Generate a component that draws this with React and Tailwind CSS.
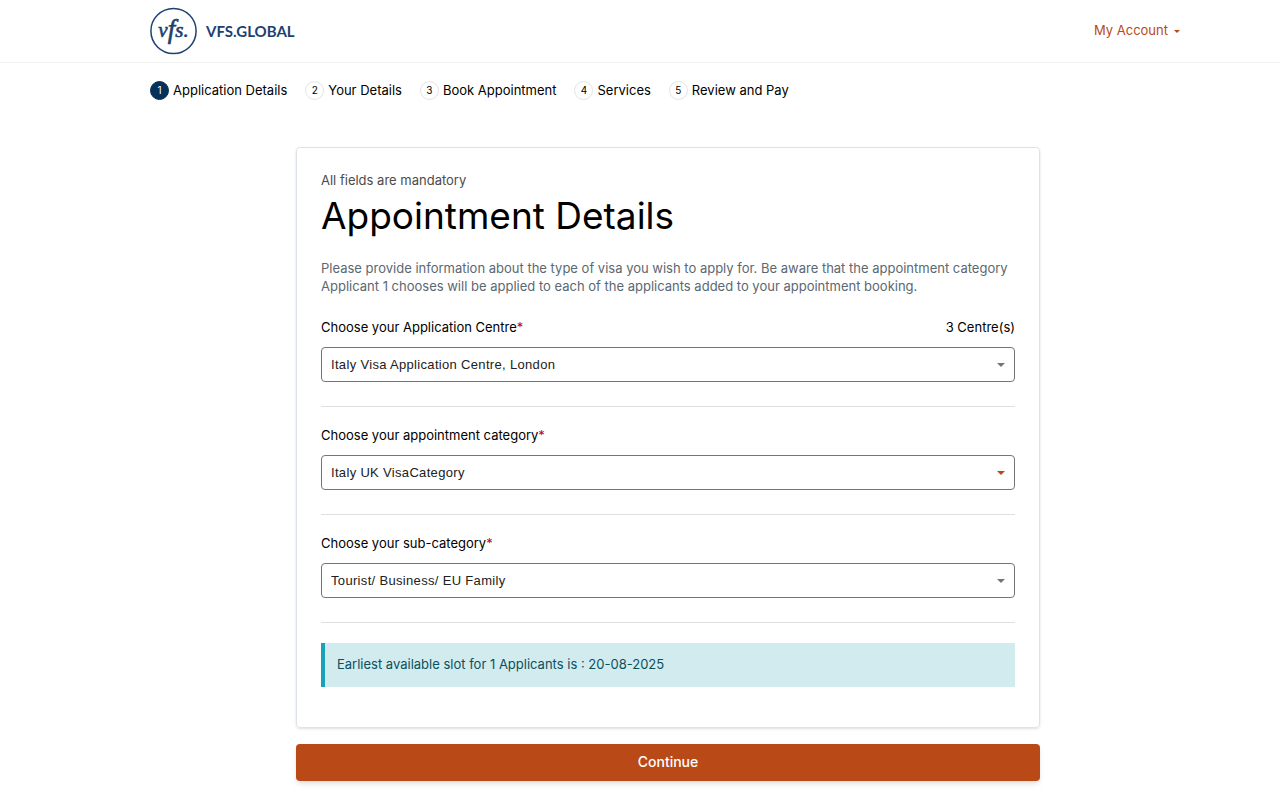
import { useState } from "react";

const steps = [
  "Application Details",
  "Your Details",
  "Book Appointment",
  "Services",
  "Review and Pay",
];

const fields = [
  {
    id: "centre",
    label: "Choose your Application Centre",
    note: "3 Centre(s)",
    options: ["Italy Visa Application Centre, London", "Italy Visa Application Centre, Manchester", "Italy Visa Application Centre, Edinburgh"],
    arrow: "text-[#757575]",
  },
  {
    id: "category",
    label: "Choose your appointment category",
    options: ["Italy UK VisaCategory"],
    arrow: "text-[#b94a17]",
  },
  {
    id: "subCategory",
    label: "Choose your sub-category",
    options: ["Tourist/ Business/ EU Family"],
    arrow: "text-[#757575]",
  },
];

function Caret({ className }) {
  return (
    <svg className={className} viewBox="0 0 8 4" fill="currentColor" aria-hidden="true">
      <path d="M0 0h8L4 4z" />
    </svg>
  );
}

function Logo() {
  return (
    <a href="#home" className="flex items-center gap-2 text-[#1d416f]" aria-label="VFS.GLOBAL home">
      <svg className="h-12 w-12" viewBox="0 0 48 48" aria-hidden="true">
        <circle cx="23.5" cy="24" r="22.6" fill="none" stroke="currentColor" strokeWidth="1.5" />
        <text
          x="23.5"
          y="30"
          textAnchor="middle"
          fill="currentColor"
          stroke="currentColor"
          strokeWidth="0.6"
          className="font-['Liberation_Serif',serif] text-[21px] italic"
        >
          v<tspan className="text-[27px]" dy="1">f</tspan><tspan dy="-1">s.</tspan>
        </text>
      </svg>
      <span className="font-['Lato',sans-serif] text-[15px] font-bold">VFS.GLOBAL</span>
    </a>
  );
}

function SelectField({ field }) {
  const [value, setValue] = useState(field.options[0]);

  return (
    <div className="mb-5 border-b border-[#dfdfdf] pb-6">
      <div className="mb-3 flex justify-between leading-4 text-black">
        <label htmlFor={field.id}>
          {field.label}
          <span className="text-[#b8001f]">*</span>
        </label>
        {field.note && <span>{field.note}</span>}
      </div>
      <div className="relative">
        <select
          id={field.id}
          value={value}
          onChange={(e) => setValue(e.target.value)}
          className="block h-[35px] w-full appearance-none rounded border border-[#757575] bg-white px-[9px] pt-0.5 font-['Liberation_Sans',Arial,sans-serif] text-[13px] tracking-wide text-[#212121]"
        >
          {field.options.map((option) => (
            <option key={option}>{option}</option>
          ))}
        </select>
        <Caret className={`pointer-events-none absolute right-2.5 top-4 h-1 w-2 ${field.arrow}`} />
      </div>
    </div>
  );
}

export default function App() {
  return (
    <div className="min-h-screen bg-white font-['Inter',sans-serif] text-[13px] text-black">
      {/* Header */}
      <header className="border-b border-[#f1f1f1] pl-14">
        <div className="mx-auto flex h-[62px] max-w-[1036px] items-center justify-between">
          <Logo />
          <button type="button" className="flex items-center gap-1.5 pr-1.5 text-[#b94a17]">
            My Account
            <Caret className="h-[3px] w-1.5" />
          </button>
        </div>
      </header>

      <main className="pb-5 pl-14">
        <div className="mx-auto max-w-[1036px]">
          {/* Progress steps */}
          <ol className="flex flex-wrap gap-[18px] pt-[18px]">
            {steps.map((step, i) => (
              <li key={step} className="flex items-center gap-1">
                <span
                  className={`flex h-[19px] w-[19px] items-center justify-center rounded-full border text-[10px] ${
                    i === 0 ? "border-[#04305a] bg-[#04305a] text-white" : "border-[#e4e4e4] text-black"
                  }`}
                >
                  {i + 1}
                </span>
                {step}
              </li>
            ))}
          </ol>

          <form className="mx-auto mt-[46px] max-w-[744px]" onSubmit={(e) => e.preventDefault()}>
            <section className="rounded border border-[#dee2e9] p-6 shadow-sm">
              <p className="leading-4 text-[#4b4b4b]">All fields are mandatory</p>
              <h1 className="mb-4 text-[37px] leading-[55px]">Appointment Details</h1>
              <p className="mb-6 leading-[18px] text-[#5b6871]">
                Please provide information about the type of visa you wish to apply for. Be aware that the appointment
                category Applicant 1 chooses will be applied to each of the applicants added to your appointment
                booking.
              </p>

              {fields.map((field) => (
                <SelectField key={field.id} field={field} />
              ))}

              <div role="status" className="mb-4 flex h-11 items-center border-l-4 border-[#17a2b8] bg-[#d1ebef] px-3 text-[#09515d]">
                Earliest available slot for 1 Applicants is : 20-08-2025
              </div>
            </section>

            <button
              type="submit"
              className="mt-4 h-[37px] w-full rounded bg-[#b94a17] text-sm font-medium text-white shadow-md"
            >
              Continue
            </button>
          </form>
        </div>
      </main>
    </div>
  );
}
